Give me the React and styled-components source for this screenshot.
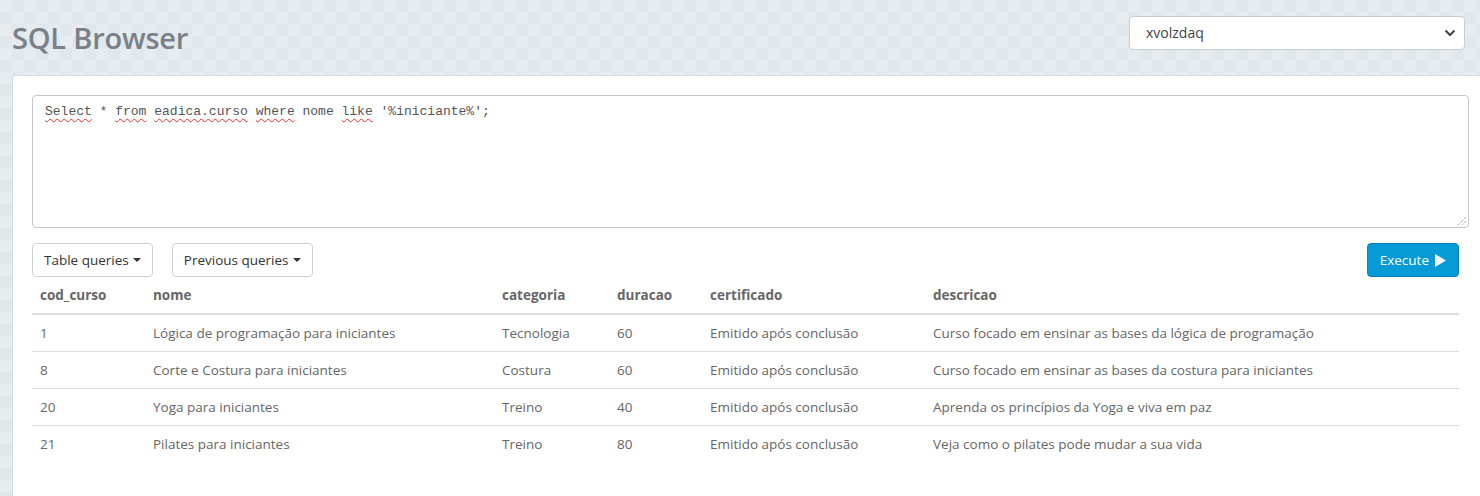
import React from 'react';
import styled, { createGlobalStyle } from 'styled-components';

const GlobalStyle = createGlobalStyle`
  html, body {
    margin: 0;
    padding: 0;
    overflow: hidden;
  }
  body {
    font-family: "Open Sans", "Noto Sans", sans-serif;
    background-color: #e6ecef;
    background-image: conic-gradient(#e1e8ec 25%, transparent 0 50%, #e1e8ec 0 75%, transparent 0);
    background-size: 24px 24px;
  }
`;

const Page = styled.div`
  height: 496px;
  overflow: hidden;
  display: flex;
  flex-direction: column;
`;

const TopBar = styled.header`
  flex: none;
  height: 75px;
  display: flex;
  align-items: center;
  justify-content: space-between;
  padding: 0 15px 0 12px;
  box-sizing: border-box;
`;

const Title = styled.h1`
  margin: 0;
  font-size: 29px;
  font-weight: 600;
  color: #7b7f88;
  letter-spacing: -0.2px;
`;

const SelectWrap = styled.div`
  position: relative;
  width: 336px;
  margin-top: -10px;
`;

const Select = styled.select`
  appearance: none;
  width: 100%;
  height: 34px;
  padding: 0 30px 0 16px;
  border: 1px solid #c9cdd1;
  border-radius: 4px;
  background: #fff;
  font-family: inherit;
  font-size: 14px;
  color: #444;
  outline: none;
`;

const Chevron = styled.svg`
  position: absolute;
  right: 9px;
  top: 13px;
  pointer-events: none;
`;

const Panel = styled.main`
  flex: 1 0 auto;
  margin: 0 0 -10px 12px;
  background: #fff;
  border: 1px solid #d3dde4;
  border-right: none;
  border-radius: 4px 0 0 4px;
  padding: 19px 21px 20px 19px;
`;

const Editor = styled.div`
  position: relative;
  box-sizing: border-box;
  width: calc(100% + 10px);
  height: 133px;
  border: 1px solid #c6c6c6;
  border-radius: 4px;
  padding: 7px 12px;
  font-family: "Liberation Mono", monospace;
  font-size: 13px;
  line-height: 18px;
  color: #555;
  white-space: pre;
`;

const Word = styled.span`
  text-decoration: ${p => (p.$flag ? 'underline wavy #e0312a' : 'none')};
  text-decoration-thickness: 1px;
  text-underline-offset: 3px;
`;

const Grip = styled.svg`
  position: absolute;
  right: 1px;
  bottom: 1px;
`;

const Toolbar = styled.div`
  display: flex;
  align-items: center;
  gap: 19px;
  margin-top: 15px;
`;

const Button = styled.button`
  height: 34px;
  padding: 0 11px;
  border: 1px solid #cfcfcf;
  border-radius: 4px;
  background: #fff;
  font-family: inherit;
  font-size: 13.5px;
  color: #333;
  display: flex;
  align-items: center;
  gap: 4px;
`;

const Caret = styled.span`
  display: inline-block;
  border-left: 4px solid transparent;
  border-right: 4px solid transparent;
  border-top: 4px solid #333;
`;

const ExecuteButton = styled(Button)`
  margin-left: auto;
  background: #069bd6;
  border-color: #0784b9;
  color: #fff;
  padding: 0 12px;
  gap: 6px;
`;

const Table = styled.table`
  width: 100%;
  border-collapse: collapse;
  font-size: 13.5px;
  color: #666;
`;

const Th = styled.th`
  box-sizing: border-box;
  width: ${p => p.$w}px;
  text-align: left;
  padding: 8px;
  line-height: 20px;
  font-weight: 700;
  color: #666;
  border-bottom: 2px solid #ddd;
`;

const Td = styled.td`
  padding: 8px;
  line-height: 20px;
  border-top: 1px solid #ddd;
`;

const columns = [
  ['cod_curso', 113],
  ['nome', 349],
  ['categoria', 115],
  ['duracao', 93],
  ['certificado', 223],
  ['descricao', 534],
];

const rows = [
  ['1', 'Lógica de programação para iniciantes', 'Tecnologia', '60', 'Emitido após conclusão', 'Curso focado em ensinar as bases da lógica de programação'],
  ['8', 'Corte e Costura para iniciantes', 'Costura', '60', 'Emitido após conclusão', 'Curso focado em ensinar as bases da costura para iniciantes'],
  ['20', 'Yoga para iniciantes', 'Treino', '40', 'Emitido após conclusão', 'Aprenda os princípios da Yoga e viva em paz'],
  ['21', 'Pilates para iniciantes', 'Treino', '80', 'Emitido após conclusão', 'Veja como o pilates pode mudar a sua vida'],
];

const query = [
  ['Select', true], [' * ', false], ['from', true], [' ', false], ['eadica.curso', true],
  [' ', false], ['where', true], [' nome ', false], ['like', true], [" '%iniciante%';", false],
];

export default function App() {
  return (
    <Page>
      <GlobalStyle />
      <TopBar>
        <Title>SQL Browser</Title>
        <SelectWrap>
          <Select defaultValue="xvolzdaq">
            <option>xvolzdaq</option>
          </Select>
          <Chevron width="12" height="8" viewBox="0 0 12 8">
            <polyline points="1.5,1.5 6,6 10.5,1.5" fill="none" stroke="#444" strokeWidth="2" />
          </Chevron>
        </SelectWrap>
      </TopBar>
      <Panel>
        <Editor>
          {query.map(([t, f], i) => (
            <Word key={i} $flag={f}>{t}</Word>
          ))}
          <Grip width="11" height="11" viewBox="0 0 11 11">
            <path d="M10 2 L2 10 M10 6 L6 10" stroke="#888" strokeWidth="1" strokeDasharray="1 1" />
          </Grip>
        </Editor>
        <Toolbar>
          <Button>Table queries <Caret /></Button>
          <Button>Previous queries <Caret /></Button>
          <ExecuteButton>
            Execute
            <svg width="11" height="13" viewBox="0 0 11 13">
              <polygon points="0,0 11,6.5 0,13" fill="#fff" />
            </svg>
          </ExecuteButton>
        </Toolbar>
        <Table>
          <thead>
            <tr>
              {columns.map(([c, w]) => (
                <Th key={c} $w={w}>{c}</Th>
              ))}
            </tr>
          </thead>
          <tbody>
            {rows.map(r => (
              <tr key={r[0]}>
                {r.map((v, i) => (
                  <Td key={i}>{v}</Td>
                ))}
              </tr>
            ))}
          </tbody>
        </Table>
      </Panel>
    </Page>
  );
}
